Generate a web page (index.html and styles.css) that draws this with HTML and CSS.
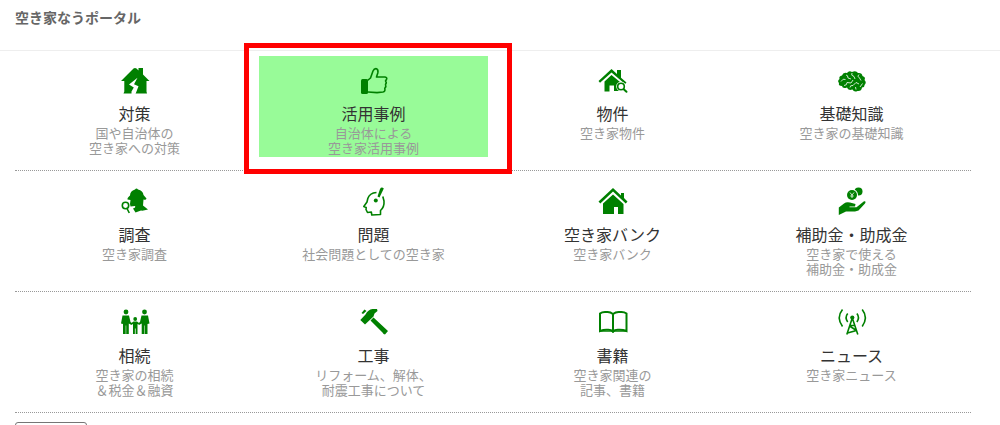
FILE: index.html
```html
<!DOCTYPE html>
<html lang="ja">
<head>
    <meta charset="UTF-8">
    <meta name="viewport" content="width=device-width, initial-scale=1">
    <title>空き家なうポータル</title>
    <link rel="stylesheet" href="styles.css">
</head>
<body>
    <header class="header">
        <h1>空き家なうポータル</h1>
    </header>
    <main class="container">
        <ul class="menu-row">
            <li>
                <a href="#">
                    <svg class="icon" viewBox="0 0 28 28">
                        <path d="M0 14 12.500 1.500Q14 .3 15.500 1.500L17.500 3.500V1H22V7.500L28.500 14H25.500V24.500L26 26.500H2.500L3.300 24.500V14Z"/>
                        <path class="cut" d="M16.500 10.800 8 17.500 12.800 20.500 10.500 24.500V27H14.500L17.500 19.300 13 17.300Z"/>
                    </svg>
                    <h2>対策</h2>
                    <p>国や自治体の<br>空き家への対策</p>
                </a>
            </li>
            <li>
                <a href="#" class="active">
                    <svg class="icon" viewBox="0 0 28 28">
                        <rect x="1" y="12" width="7" height="15" rx="1.500"/>
                        <path class="line" d="M7.500 13.500 10.500 11 13 4Q14.200 1.300 16.500 1.700 18.500 2.500 17.800 6L16.500 10H25Q27.500 10.500 26.500 12.500L25.500 14Q27 15.500 25.500 17.500 26.500 19.500 24.800 21.300 25.500 24.500 23 25L17 25.600 8 25"/>
                    </svg>
                    <h2>活用事例</h2>
                    <p>自治体による<br>空き家活用事例</p>
                </a>
            </li>
            <li>
                <a href="#">
                    <svg class="icon" viewBox="0 0 28 28">
                        <path d="M-.5 14 12.500 2 18 7V3H22V10.700L27.500 15.500 26 17 12.500 5.500 1 15.800Z"/>
                        <path d="M5.500 14.500 12.500 8 21 15V24H15V18.500H10.500V24.500H5.500Z"/>
                        <path class="cut-line" d="M25 22.500 28 25.500"/>
                        <circle class="halo" cx="22" cy="19.500" r="4.800"/>
                        <circle class="line" cx="22" cy="19.500" r="3.300"/>
                        <path class="bold" d="M24.700 22.200 27.500 24.800"/>
                    </svg>
                    <h2>物件</h2>
                    <p>空き家物件</p>
                </a>
            </li>
            <li>
                <a href="#">
                    <svg class="icon" viewBox="0 0 28 28">
                        <path d="M1 16Q-1 14 1.500 12 .5 9 4 8.500 5 5 9 6 11 3 14 5 18 3 20 6 24 5.500 24.500 9 28 10 26.500 13 29 15.500 26.500 18 26.500 20.500 24 20.500 23.500 24.500 19.500 24 16 25.500 14.500 22.500 10 24 9 20.500 4.500 22 4 19 0 19 1 16Z"/>
                        <path class="cut-line" d="M3 14.500Q5 11 7.500 12.500M8 8Q10 8 10 11L13 12M14 6Q12.500 8.500 16 9.500L17 12M21 7.500Q18.500 9 21.500 11L23 13.500M6 18.500Q9 18.500 9 15.500L13 16 15 13M12 20.500Q12 18 15 18.500L18 15.500 21 17M24.500 16.500 22 20M18 22.500 17.500 20"/>
                    </svg>
                    <h2>基礎知識</h2>
                    <p>空き家の基礎知識</p>
                </a>
            </li>
        </ul>
        <ul class="menu-row">
            <li>
                <a href="#">
                    <svg class="icon" viewBox="0 0 28 28">
                        <path d="M14 1.500Q15.500-.5 17 1.500 22 2.500 22.500 7L25.500 10.500Q25 12.500 22.500 11.500L22 17.500 27 21.500Q22 23 20 22.500L14.500 24.500 12 20.500Q15 19.500 14 18L9.500 18.500 9 16 9.500 12 6.500 11.500Q6 10 9 7.500 9 3 14 1.500Z"/>
                        <circle class="line" cx="4.500" cy="17.500" r="3.200"/>
                        <path class="line" d="M6 20.500 8.300 25"/>
                    </svg>
                    <h2>調査</h2>
                    <p>空き家調査</p>
                </a>
            </li>
            <li>
                <a href="#">
                    <svg class="icon" viewBox="0 0 28 28">
                        <path class="line" d="M16.500 4.500Q9.500 5 7.800 10.500L7 14 3.800 18.500 6.200 19.500 6 21.500 7.500 24.500 11.300 24 11.800 27 20.500 26.500V22.500Q24.500 19 24 13L22.800 8.500"/>
                        <path d="M20 1Q21.500-1.500 23.800.5L19.500 9.500 17.500 8.500Z"/>
                        <circle cx="15.800" cy="12.500" r="2"/>
                    </svg>
                    <h2>問題</h2>
                    <p>社会問題としての空き家</p>
                </a>
            </li>
            <li>
                <a href="#">
                    <svg class="icon" viewBox="0 0 28 28">
                        <path d="M-.5 13.500 14 0 22 7.500V5H25V10L28.500 13.500 26.800 15.500 14 3.500 1.300 15.500Z"/>
                        <path d="M4 15.500 14 6.500 24.500 16V26H19V19H15V26H4Z"/>
                    </svg>
                    <h2>空き家バンク</h2>
                    <p>空き家バンク</p>
                </a>
            </li>
            <li>
                <a href="#">
                    <svg class="icon" viewBox="0 0 28 28">
                        <circle cx="20.500" cy="3.500" r="4"/>
                        <circle class="halo" cx="14" cy="7" r="6"/>
                        <circle cx="14" cy="7" r="5"/>
                        <path class="cut-line" d="M12 4.500 14 7 16 4.500M14 7V10M12.300 8H15.700"/>
                        <path d="M.8 27V19.500L6 15.500Q8.500 13.500 12 14.500L17.500 16 17 18.500H11.500V19.300H18.500L26 13.300Q28.500 13 27 15.500L20.500 22.500 17 23.500H8Z"/>
                    </svg>
                    <h2>補助金・助成金</h2>
                    <p>空き家で使える<br>補助金・助成金</p>
                </a>
            </li>
        </ul>
        <ul class="menu-row">
            <li>
                <a href="#">
                    <svg class="icon" viewBox="0 0 28 28">
                        <circle cx="5" cy="3" r="2.400"/>
                        <circle cx="23.500" cy="3" r="2.400"/>
                        <circle cx="14.200" cy="10" r="1.900"/>
                        <path d="M1.500 6.500H8L9.500 13 11.500 14.500 10.500 16 7.800 14.500V25H5.200V16.500H4.700V25H2V15L0 14.500Z"/>
                        <path d="M27 6.500H20.500L19 13 17 14.500 18 16 20.700 14.500V25H23.300V16.500H23.800V25H26.500V15L28.500 14.500Z"/>
                        <path d="M10.500 14 12.500 12.500H16L18 14 17.500 15.500 16.500 15V25H14.600V19.500H13.900V25H12V15L11 15.500Z"/>
                    </svg>
                    <h2>相続</h2>
                    <p>空き家の相続<br>＆税金＆融資</p>
                </a>
            </li>
            <li>
                <a href="#">
                    <svg class="icon" viewBox="0 0 28 28">
                        <path d="M.3 11 5.500 5.500Q8 .5 12.500 0H17L17.500 2 14.500 4.500 13.500 7.500 5 15.500Z"/>
                        <path d="M1.500 4 4.500.5 6.500 2 3 5Z"/>
                        <path d="M10.500 11.500 13.500 8.500 28 22 25 25.500Q23.500 25.500 22.500 23.500Z"/>
                    </svg>
                    <h2>工事</h2>
                    <p>リフォーム、解体、<br>耐震工事について</p>
                </a>
            </li>
            <li>
                <a href="#">
                    <svg class="icon" viewBox="0 0 28 28">
                        <path class="thick" d="M14 5Q11 2.500 7.500 3 3.500 2.500 1 4.500V22Q5 20.500 8.500 20.800 12 20.500 14 22.500 16 20.500 19.500 20.800 23.500 20.500 27.500 22V4.500Q25 2.500 21 3 17 2.500 14 5V22"/>
                        <path d="M.5 21.500H28V22.800H15.500L14 24 12.500 22.800H.5Z"/>
                    </svg>
                    <h2>書籍</h2>
                    <p>空き家関連の<br>記事、書籍</p>
                </a>
            </li>
            <li>
                <a href="#">
                    <svg class="icon" viewBox="0 0 28 28">
                        <circle cx="14.300" cy="8.500" r="2.100"/>
                        <path class="line" d="M14.300 9 8.800 25.500M14.300 9 19.800 25.500M12 16.500H16.500M11.500 17 18.500 21.500 9.500 24M9.700 4.500Q6.500 8.500 9.700 13M18.900 4.500Q22 8.500 18.900 13"/>
                        <path class="line" d="M4.500.5Q-2 8.500 4.500 17.500M24.200.5Q30.500 8.500 24.200 17.500"/>
                    </svg>
                    <h2>ニュース</h2>
                    <p>空き家ニュース</p>
                </a>
            </li>
        </ul>
        <button type="button" class="more-button"></button>
    </main>
</body>
</html>
```
FILE: styles.css
```css
body { height: 100vh; margin: 0; overflow: hidden; background: #fff; font-family: "Noto Sans CJK JP", sans-serif; }
h1, h2, p, ul { margin: 0; padding: 0; }

.header { padding: 6px 15px 22px; border-bottom: 1px solid #eee; }
.header h1 { font-size: 14px; line-height: 22px; font-weight: bold; color: #666; }

.container { padding: 0 29px 0 15px; }
.menu-row { display: grid; grid-template-columns: repeat(4, 1fr); margin-bottom: 1px; border-bottom: 1px dotted #999; list-style: none; }
.menu-row li { padding: 5px 5px 13px; }
.menu-row a { display: block; position: relative; padding: 11px 0 2px; text-align: center; text-decoration: none; }
.menu-row h2 { margin-bottom: 2px; font-size: 16px; line-height: 20px; font-weight: normal; color: #333; }
.menu-row p { font-size: 13px; line-height: 15px; color: #999; }

/* current item, framed in red */
.menu-row .active { background: #98fb98; }
.menu-row .active::after { content: ""; position: absolute; top: -13px; right: -24px; bottom: -17px; left: -15px; border: 5px solid #f00; }

.icon { display: block; width: 28px; height: 28px; margin: 0 auto 8px; overflow: visible; fill: #008000; }
.icon .line { fill: none; stroke: #008000; stroke-width: 1.6; stroke-linejoin: round; }
.icon .thick, .icon .bold { fill: none; stroke: #008000; stroke-width: 2; stroke-linecap: round; }
.icon .cut { fill: #fff; }
.icon .cut-line { fill: none; stroke: #fff; stroke-width: 0.8; }
.icon .halo { fill: #fff; }

.more-button { display: block; width: 72px; height: 30px; margin-top: 9px; border: 1px solid #767676; border-radius: 3px; background: #fff; }
```
